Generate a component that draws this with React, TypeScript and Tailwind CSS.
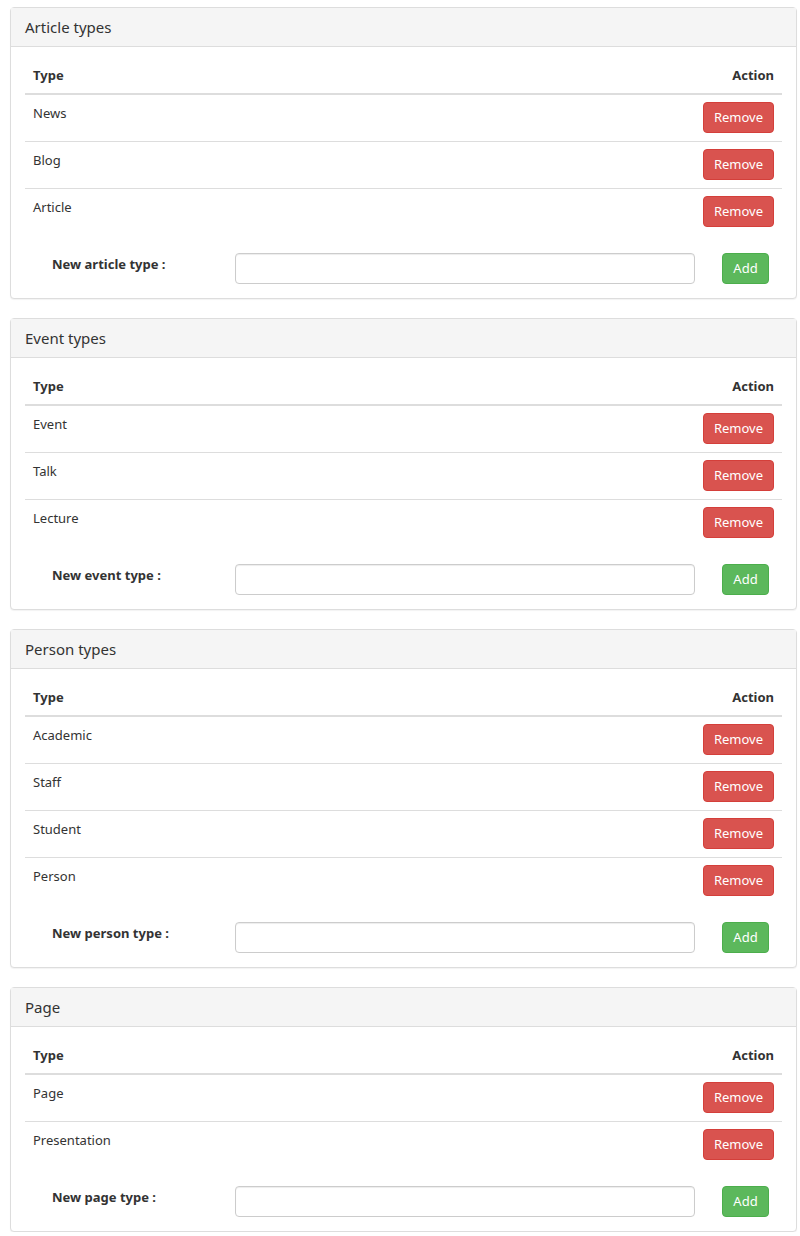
const sections = [
  { title: "Article types", label: "New article type :", rows: ["News", "Blog", "Article"] },
  { title: "Event types", label: "New event type :", rows: ["Event", "Talk", "Lecture"] },
  { title: "Person types", label: "New person type :", rows: ["Academic", "Staff", "Student", "Person"] },
  { title: "Page", label: "New page type :", rows: ["Page", "Presentation"] },
];

function TypePanel({ title, label, rows }: { title: string; label: string; rows: string[] }) {
  return (
    <div className="rounded border border-[#dddddd] bg-white shadow-[0_1px_1px_rgba(0,0,0,0.05)]">
      <div className="h-[39px] border-b border-[#dddddd] bg-[#f5f5f5] px-[14px] pt-[9px] text-[15px] leading-[20px] text-[#333]">
        {title}
      </div>
      <div className="px-[14px] pt-[11px] pb-[14px]">
        <table className="w-full border-collapse text-[13px] text-[#333]">
          <thead>
            <tr className="border-b-2 border-[#dddddd]">
              <th className="h-[36px] px-2 text-left font-bold">Type</th>
              <th className="h-[36px] px-2 text-right font-bold">Action</th>
            </tr>
          </thead>
          <tbody>
            {rows.map((r, i) => (
              <tr key={r} className={i < rows.length - 1 ? "border-b border-[#dddddd]" : ""}>
                <td className="h-[47px] px-2 pt-[8px] align-top leading-[20px]">{r}</td>
                <td className="h-[47px] px-2 text-right align-middle">
                  <button className="h-[31px] w-[71px] rounded border border-[#d43f3a] bg-[#d9534f] text-[13px] text-white">
                    Remove
                  </button>
                </td>
              </tr>
            ))}
          </tbody>
        </table>
        <div className="mt-[18px] flex items-start">
          <div className="w-[210px] pl-[27px] pt-[1px] text-[13px] font-bold leading-[20px] text-[#333]">{label}</div>
          <input className="h-[31px] w-[460px] rounded border border-[#cccccc] shadow-[inset_0_1px_1px_rgba(0,0,0,0.075)]" />
          <button className="ml-[27px] h-[31px] w-[47px] rounded border border-[#4cae4c] bg-[#5cb85c] text-[13px] text-white">
            Add
          </button>
        </div>
      </div>
    </div>
  );
}

export default function App() {
  return (
    <div className="flex w-[800px] flex-col gap-[19px] px-[10px] pt-[7px] pr-[3px] font-['Liberation_Sans']">
      {sections.map((s) => (
        <TypePanel key={s.title} {...s} />
      ))}
    </div>
  );
}
